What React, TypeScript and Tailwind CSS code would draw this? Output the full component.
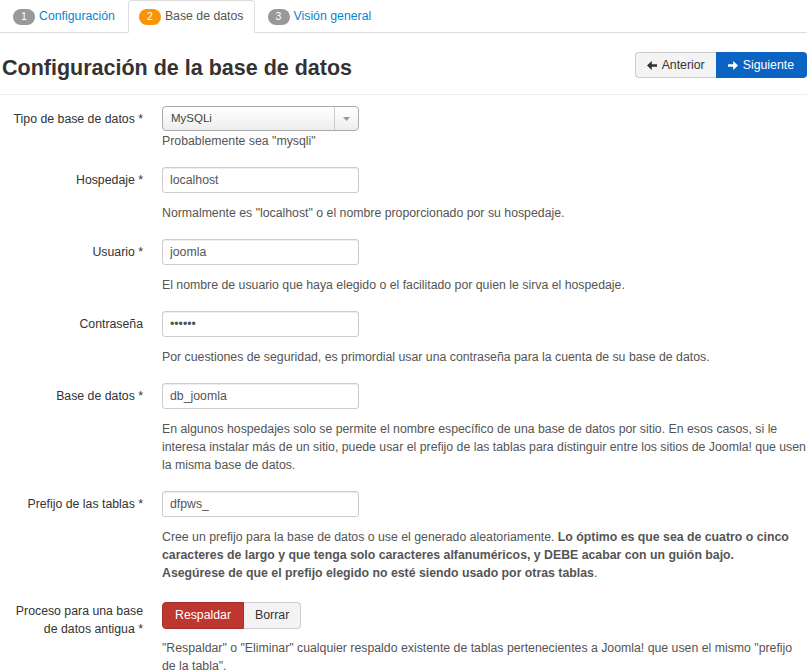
import React from 'react'

const FONT = "font-['Liberation_Sans',Arial,sans-serif]"

function ArrowIcon({ dir }: { dir: 'left' | 'right' }) {
  const d = dir === 'right' ? 'M0 3.2H5.2V0L10 4.5L5.2 9V5.8H0Z' : 'M10 3.2H4.8V0L0 4.5L4.8 9V5.8H10Z'
  return (
    <svg width="10" height="9" viewBox="0 0 10 9" className="inline-block">
      <path d={d} fill="currentColor" />
    </svg>
  )
}

function Badge({ n, active }: { n: number; active?: boolean }) {
  return (
    <span
      className={`inline-flex items-center justify-center h-[16px] w-[22px] rounded-full text-[10.5px] text-white ${active ? 'bg-[#f89406]' : 'bg-[#999]'}`}
    >
      {n}
    </span>
  )
}

const TABS = [
  { n: 1, label: 'Configuración' },
  { n: 2, label: 'Base de datos', active: true },
  { n: 3, label: 'Visión general' },
]

function Row({ label, children, pt = 'pt-[4px]', mb = 'mb-[17px]' }: { label: React.ReactNode; children: React.ReactNode; pt?: string; mb?: string }) {
  return (
    <div className={`flex ${mb}`}>
      <div className={`w-[143px] shrink-0 text-right leading-[18px] text-[#333] ${pt}`}>{label}</div>
      <div className="ml-[19px] flex-1">{children}</div>
    </div>
  )
}

function TextInput({ value, type = 'text' }: { value: string; type?: string }) {
  return (
    <input
      type={type}
      readOnly
      value={value}
      className="block w-[197px] h-[26px] px-[7px] border border-[#ccc] rounded-[3px] text-[12.3px] text-[#555] bg-white shadow-[inset_0_1px_1px_rgba(0,0,0,0.075)] outline-none"
    />
  )
}

function Help({ children }: { children: React.ReactNode }) {
  return <p className="mt-[11px] leading-[18px] text-[#555]">{children}</p>
}

export default function App() {
  return (
    <div className={`${FONT} text-[12.3px] w-[807px] bg-white text-[#333]`}>
      {/* tabs */}
      <div className="flex h-[33px] pl-[2px] border-b border-[#ddd]">
        {TABS.map(t => (
          <div
            key={t.n}
            className={`flex items-center gap-[4px] px-[10px] mr-[2px] h-[33px] border rounded-t-[4px] ${t.active ? 'bg-white border-[#ddd] border-b-white text-[#555] -mb-px' : 'border-transparent text-[#0a84d0]'}`}
          >
            <Badge n={t.n} active={t.active} />
            <span>{t.label}</span>
          </div>
        ))}
      </div>

      {/* header */}
      <div className="flex justify-between items-start h-[43px] mt-[19px] border-b border-[#eee]">
        <h2 className="pl-[2px] mt-[2px] text-[21.5px] leading-[28px] font-bold text-[#333]">Configuración de la base de datos</h2>
        <div className="flex h-[26px]">
          <button className="flex items-center gap-[5px] px-[11px] border border-[#ccc] border-r-0 rounded-l-[4px] bg-[#f3f3f3] text-[#333]">
            <ArrowIcon dir="left" /> Anterior
          </button>
          <button className="flex items-center gap-[5px] pl-[12px] pr-[13px] rounded-r-[4px] bg-[#0b63c4] text-white">
            <ArrowIcon dir="right" /> Siguiente
          </button>
        </div>
      </div>

      <div className="mt-[11px]">
        <Row label="Tipo de base de datos *">
          <div className="flex w-[197px] h-[25px] border border-[#aaa] rounded-[4px] bg-gradient-to-b from-white to-[#eee]">
            <span className="flex-1 pl-[8px] leading-[23px] text-[11.5px] text-[#444]">MySQLi</span>
            <span className="w-[24px] border-l border-[#ccc] flex items-center justify-center">
              <svg width="7" height="4" viewBox="0 0 7 4">
                <path d="M0 0H7L3.5 4Z" fill="#999" />
              </svg>
            </span>
          </div>
          <p className="mt-[1px] leading-[18px] text-[#555]">Probablemente sea "mysqli"</p>
        </Row>

        <Row label="Hospedaje *">
          <TextInput value="localhost" />
          <Help>Normalmente es "localhost" o el nombre proporcionado por su hospedaje.</Help>
        </Row>

        <Row label="Usuario *">
          <TextInput value="joomla" />
          <Help>El nombre de usuario que haya elegido o el facilitado por quien le sirva el hospedaje.</Help>
        </Row>

        <Row label="Contraseña">
          <TextInput value="joomla" type="password" />
          <Help>Por cuestiones de seguridad, es primordial usar una contraseña para la cuenta de su base de datos.</Help>
        </Row>

        <Row label="Base de datos *">
          <TextInput value="db_joomla" />
          <Help>
            En algunos hospedajes solo se permite el nombre específico de una base de datos por sitio. En esos casos, si le
            interesa instalar más de un sitio, puede usar el prefijo de las tablas para distinguir entre los sitios de Joomla! que usen
            la misma base de datos.
          </Help>
        </Row>

        <Row label="Prefijo de las tablas *" mb="mb-[20px]">
          <TextInput value="dfpws_" />
          <Help>
            Cree un prefijo para la base de datos o use el generado aleatoriamente.{' '}
            <b>
              Lo óptimo es que sea de cuatro o cinco caracteres de largo y que tenga solo caracteres alfanuméricos, y DEBE
              acabar con un guión bajo.
              <br />
              Asegúrese de que el prefijo elegido no esté siendo usado por otras tablas
            </b>
            .
          </Help>
        </Row>

        <Row label={<>Proceso para una base<br />de datos antigua *</>} pt="pt-0">
          <div className="flex h-[27px]">
            <button className="px-[12px] rounded-l-[4px] bg-[#bd362f] text-white border border-[#a52e28]">Respaldar</button>
            <button className="px-[11px] rounded-r-[4px] bg-[#f3f3f3] text-[#333] border border-[#ccc] border-l-0">Borrar</button>
          </div>
          <p className="mt-[10px] leading-[18px] text-[#555]">
            "Respaldar" o "Eliminar" cualquier respaldo existente de tablas pertenecientes a Joomla! que usen el mismo "prefijo
            de la tabla".
          </p>
        </Row>
      </div>
    </div>
  )
}
